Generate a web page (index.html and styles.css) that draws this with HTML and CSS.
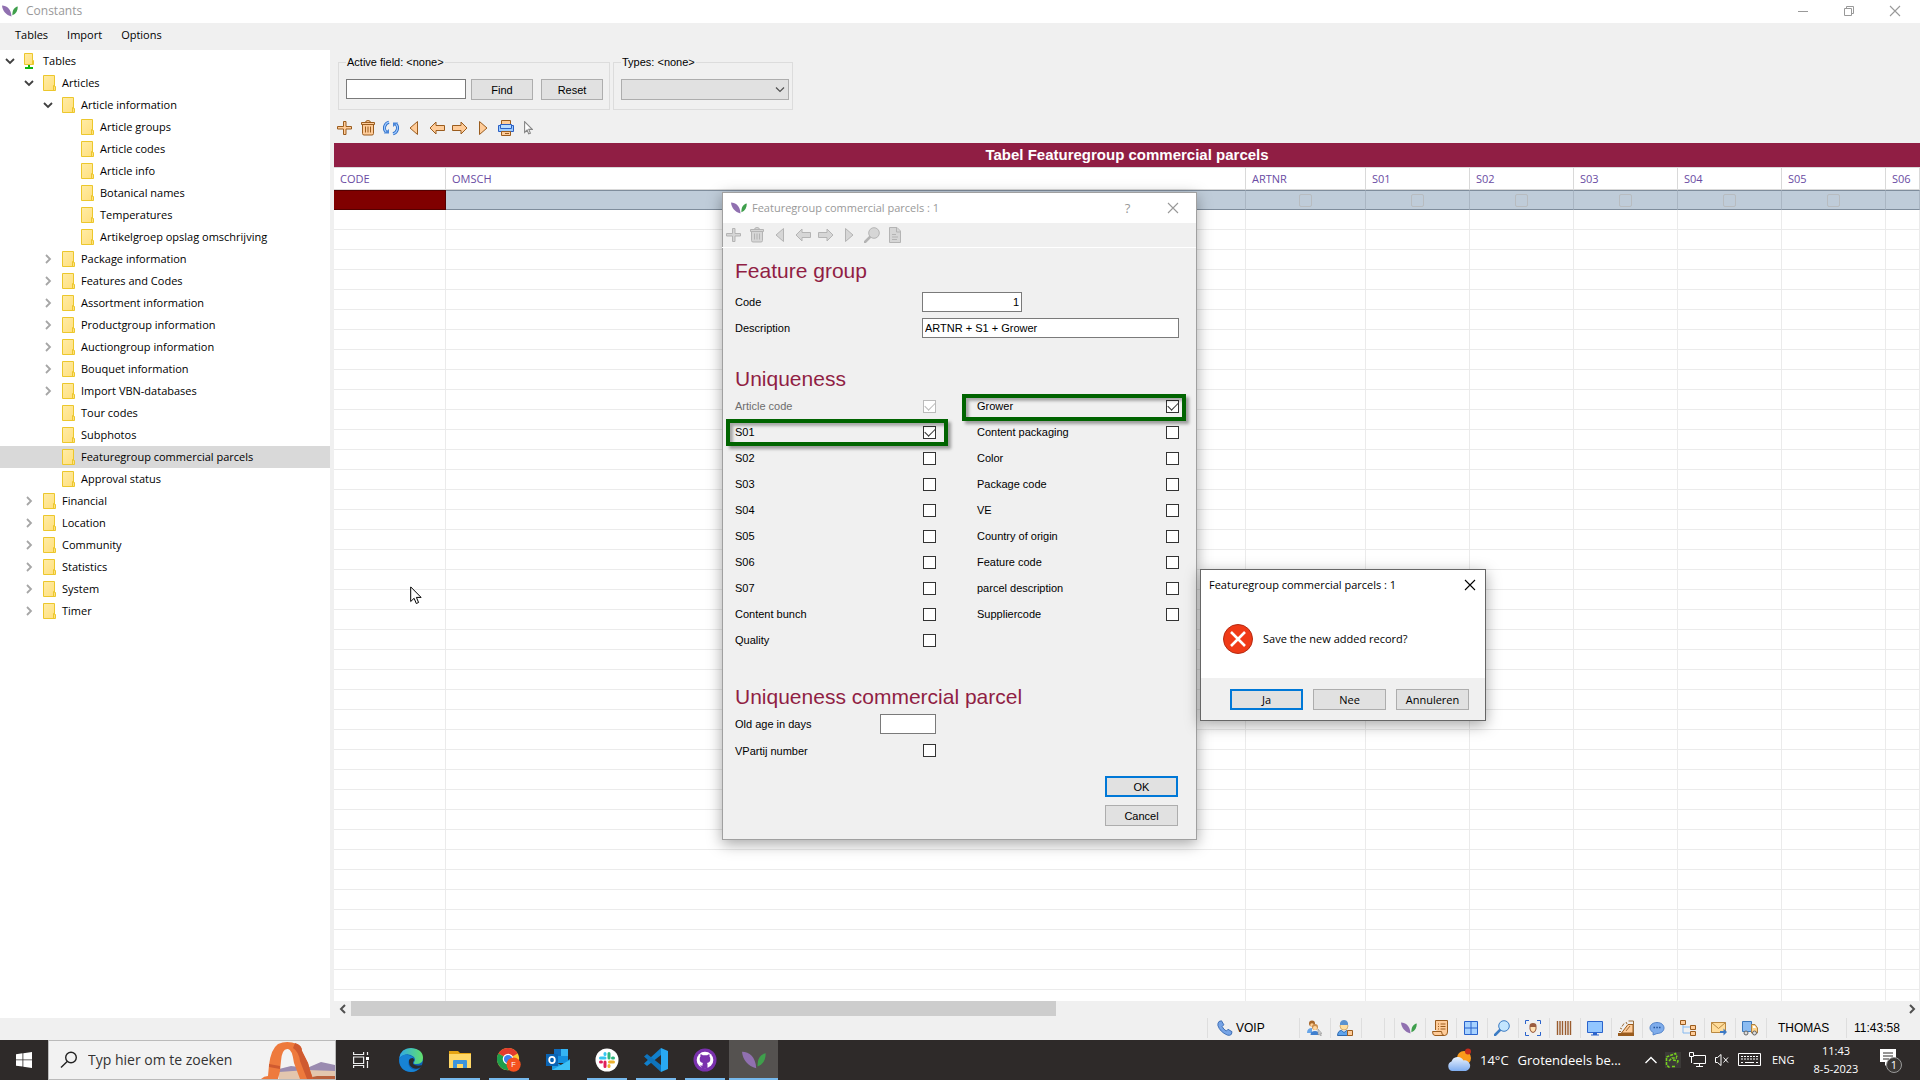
FILE: index.html
```html
<!DOCTYPE html>
<html lang="en">
<head>
<meta charset="utf-8">
<title>Constants</title>
<link rel="stylesheet" href="styles.css">
</head>
<body>
<svg class="sprite" aria-hidden="true">
  <linearGradient id="folder-fill" x1="0" y1="0" x2="1" y2="1"><stop offset="0" stop-color="#ffeca6"/><stop offset="1" stop-color="#ffdf7c"/></linearGradient>
  <linearGradient id="edge-top" x1="0" y1="0" x2="1" y2="0"><stop offset="0" stop-color="#2fa8e8"/><stop offset="1" stop-color="#62e06c"/></linearGradient>
  <linearGradient id="cloud-fill" x1="0" y1="0" x2="0" y2="1"><stop offset="0" stop-color="#eaf2fd"/><stop offset="1" stop-color="#7fadf0"/></linearGradient>
  <symbol id="folder" viewBox="0 0 13 16"><path d="M.5.5h11v11h1v4H.5z" fill="url(#folder-fill)" stroke="#ecc72c"/><path d="M10.500 15v-4.500h1" fill="none" stroke="#ecc72c"/></symbol>
  <symbol id="folder-root" viewBox="0 0 13 16"><path d="M.5.500h8v7h1v4h-9z" fill="url(#folder-fill)" stroke="#ecc72c"/><path d="M8.500 11V7.500" stroke="#ecc72c"/><path d="M4 12h2v2h3v2H1v-2h3z" fill="#12b412"/></symbol>
  <symbol id="leaf" viewBox="0 0 16 12"><path d="M0 .5C5 .5 9 4 9.500 11.500 4 10 .5 6 0 .5z" fill="#9070b0"/><path d="M15.800 1.500c-3.500.7-5.600 3.500-5.400 8.800C14 9 15.800 6 15.800 1.500z" fill="#3f9f4c"/></symbol>
  <symbol id="plus" viewBox="0 0 16 16"><path d="M6.500 1.500h2.500v5h5.500V9H9v5.500H6.500V9h-6V6.500h6z" class="ink"/></symbol>
  <symbol id="trash" viewBox="0 0 16 16"><path d="M2.500 4.500h11v9q0 1.500-1.500 1.500H4q-1.500 0-1.500-1.500z" class="ink"/><path d="M1.500 2.500h13v2h-13zM5.500 2.500q0-2 2.500-2t2.500 2M5.500 6.500v6M8 6.500v6M10.500 6.500v6" class="ink"/></symbol>
  <symbol id="refresh" viewBox="0 0 16 16"><path d="M6 2.200A6 6 0 0 0 3 12M10 13.800A6 6 0 0 0 13 4" fill="none" stroke="#2a6ac4" stroke-width="3"/><path d="M6 2.200A6 6 0 0 0 3 12M10 13.800A6 6 0 0 0 13 4" fill="none" stroke="#9cc8ff" stroke-width="1.200"/><path d="M.8 13.500H6V9zM15.200 2.500H10V7z" fill="#4a86d8"/></symbol>
  <symbol id="first" viewBox="0 0 16 16"><path d="M11.500 1.500v13L4 8z" class="ink"/></symbol>
  <symbol id="prev" viewBox="0 0 16 16"><path d="M1 8l6-6v3.500h8.500v5H7V14z" class="ink"/></symbol>
  <symbol id="next" viewBox="0 0 16 16"><path d="M15 8L9 2v3.500H.5v5H9V14z" class="ink"/></symbol>
  <symbol id="last" viewBox="0 0 16 16"><path d="M4.500 1.500v13L12 8z" class="ink"/></symbol>
  <symbol id="printer" viewBox="0 0 16 16"><path d="M3.500.5h9v5h-9z" fill="#fc9" stroke="#9a5c1e"/><path d="M.5 5.500h15v6H.5z" fill="#9ccbff" stroke="#2a5fc4"/><path d="M2.500 4.500h11v4h-11z" fill="#b9dcff" stroke="#2a5fc4"/><path d="M3.500 11.500h9v4h-9z" fill="#fc9" stroke="#9a5c1e"/><path d="M7 13.500h4" stroke="#9a5c1e"/></symbol>
  <symbol id="pointer" viewBox="0 0 12 19"><path d="M.7.9v14.600l3.400-3.200 2.200 5.200 2.300-1-2.200-5.100h4.700z"/></symbol>
  <symbol id="lens" viewBox="0 0 16 16"><path d="M6 10L1 15" class="handle" stroke-width="2.500" stroke-linecap="round"/><circle cx="10" cy="6" r="5.300" class="ink"/></symbol>
  <symbol id="page" viewBox="0 0 16 16"><path d="M2.500.5h7.500l3.500 3.500v11.500h-11z" class="ink"/><path d="M9.500.5V5h4M5 7.500h4M5 10h6M5 12.500h5" class="ink"/></symbol>
  <symbol id="close" viewBox="0 0 12 12"><path d="M1 1l10 10M11 1L1 11" fill="none" stroke="currentColor" stroke-width="1.100"/></symbol>
  <symbol id="open" viewBox="0 0 10 8"><path d="M1 2l4 4 4-4" fill="none" stroke="#404040" stroke-width="1.800"/></symbol>
  <symbol id="shut" viewBox="0 0 8 10"><path d="M2 1l4 4-4 4" fill="none" stroke="#a6a6a6" stroke-width="1.800"/></symbol>
</svg>

<header class="titlebar">
  <svg class="leaf"><use href="#leaf"/></svg>
  <span class="titlebar-name">Constants</span>
  <div class="caption-buttons">
    <button aria-label="Minimize"><svg width="12" height="12"><path d="M1 6.500h10" stroke="#999"/></svg></button>
    <button aria-label="Restore"><svg width="12" height="12" fill="none" stroke="#999"><path d="M1.500 3.500h7v7h-7zM3.500 3V1.500h7v7H9"/></svg></button>
    <button aria-label="Close"><svg width="12" height="12"><use href="#close"/></svg></button>
  </div>
</header>
<nav class="menubar"><button>Tables</button><button>Import</button><button>Options</button></nav>

<main class="workspace">
  <ul class="tree" role="tree">
    <li class="level-0"><svg class="twist"><use href="#open"/></svg><svg class="folder"><use href="#folder-root"/></svg>Tables</li>
    <li class="level-1"><svg class="twist"><use href="#open"/></svg><svg class="folder"><use href="#folder"/></svg>Articles</li>
    <li class="level-2"><svg class="twist"><use href="#open"/></svg><svg class="folder"><use href="#folder"/></svg>Article information</li>
    <li class="level-3"><svg class="twist"></svg><svg class="folder"><use href="#folder"/></svg>Article groups</li>
    <li class="level-3"><svg class="twist"></svg><svg class="folder"><use href="#folder"/></svg>Article codes</li>
    <li class="level-3"><svg class="twist"></svg><svg class="folder"><use href="#folder"/></svg>Article info</li>
    <li class="level-3"><svg class="twist"></svg><svg class="folder"><use href="#folder"/></svg>Botanical names</li>
    <li class="level-3"><svg class="twist"></svg><svg class="folder"><use href="#folder"/></svg>Temperatures</li>
    <li class="level-3"><svg class="twist"></svg><svg class="folder"><use href="#folder"/></svg>Artikelgroep opslag omschrijving</li>
    <li class="level-2"><svg class="twist"><use href="#shut"/></svg><svg class="folder"><use href="#folder"/></svg>Package information</li>
    <li class="level-2"><svg class="twist"><use href="#shut"/></svg><svg class="folder"><use href="#folder"/></svg>Features and Codes</li>
    <li class="level-2"><svg class="twist"><use href="#shut"/></svg><svg class="folder"><use href="#folder"/></svg>Assortment information</li>
    <li class="level-2"><svg class="twist"><use href="#shut"/></svg><svg class="folder"><use href="#folder"/></svg>Productgroup information</li>
    <li class="level-2"><svg class="twist"><use href="#shut"/></svg><svg class="folder"><use href="#folder"/></svg>Auctiongroup information</li>
    <li class="level-2"><svg class="twist"><use href="#shut"/></svg><svg class="folder"><use href="#folder"/></svg>Bouquet information</li>
    <li class="level-2"><svg class="twist"><use href="#shut"/></svg><svg class="folder"><use href="#folder"/></svg>Import VBN-databases</li>
    <li class="level-2"><svg class="twist"></svg><svg class="folder"><use href="#folder"/></svg>Tour codes</li>
    <li class="level-2"><svg class="twist"></svg><svg class="folder"><use href="#folder"/></svg>Subphotos</li>
    <li class="level-2 selected"><svg class="twist"></svg><svg class="folder"><use href="#folder"/></svg>Featuregroup commercial parcels</li>
    <li class="level-2"><svg class="twist"></svg><svg class="folder"><use href="#folder"/></svg>Approval status</li>
    <li class="level-1"><svg class="twist"><use href="#shut"/></svg><svg class="folder"><use href="#folder"/></svg>Financial</li>
    <li class="level-1"><svg class="twist"><use href="#shut"/></svg><svg class="folder"><use href="#folder"/></svg>Location</li>
    <li class="level-1"><svg class="twist"><use href="#shut"/></svg><svg class="folder"><use href="#folder"/></svg>Community</li>
    <li class="level-1"><svg class="twist"><use href="#shut"/></svg><svg class="folder"><use href="#folder"/></svg>Statistics</li>
    <li class="level-1"><svg class="twist"><use href="#shut"/></svg><svg class="folder"><use href="#folder"/></svg>System</li>
    <li class="level-1"><svg class="twist"><use href="#shut"/></svg><svg class="folder"><use href="#folder"/></svg>Timer</li>
  </ul>

  <section class="content">
    <div class="filters">
      <fieldset class="filter">
        <legend>Active field: &lt;none&gt;</legend>
        <input class="find-text" type="text" aria-label="Active field">
        <button class="push find-button">Find</button>
        <button class="push find-button">Reset</button>
      </fieldset>
      <fieldset class="filter types">
        <legend>Types: &lt;none&gt;</legend>
        <span class="select-wrap"><select aria-label="Types"><option></option></select><svg width="10" height="6"><path d="M1 .5l4 4 4-4" fill="none" stroke="#505050" stroke-width="1.200"/></svg></span>
      </fieldset>
    </div>
    <div class="toolbar">
      <button aria-label="Add"><svg><use href="#plus"/></svg></button>
      <button aria-label="Delete"><svg><use href="#trash"/></svg></button>
      <button aria-label="Refresh"><svg><use href="#refresh"/></svg></button>
      <button aria-label="First"><svg><use href="#first"/></svg></button>
      <button aria-label="Previous"><svg><use href="#prev"/></svg></button>
      <button aria-label="Next"><svg><use href="#next"/></svg></button>
      <button aria-label="Last"><svg><use href="#last"/></svg></button>
      <button aria-label="Print"><svg><use href="#printer"/></svg></button>
      <button aria-label="Select"><svg class="select-icon"><use href="#pointer"/></svg></button>
    </div>
    <h1 class="grid-title">Tabel Featuregroup commercial parcels</h1>
    <div class="grid-view">
      <table class="grid">
        <colgroup><col class="col-code"><col><col class="col-artnr"><col class="col-s"><col class="col-s"><col class="col-s"><col class="col-s"><col class="col-s"><col class="col-cut"></colgroup>
        <thead><tr><th>CODE</th><th>OMSCH</th><th>ARTNR</th><th>S01</th><th>S02</th><th>S03</th><th>S04</th><th>S05</th><th>S06</th></tr></thead>
        <tbody id="rows">
          <tr class="current"><td></td><td></td>
            <td><input type="checkbox" disabled aria-label="ARTNR"></td><td><input type="checkbox" disabled aria-label="S01"></td><td><input type="checkbox" disabled aria-label="S02"></td><td><input type="checkbox" disabled aria-label="S03"></td><td><input type="checkbox" disabled aria-label="S04"></td><td><input type="checkbox" disabled aria-label="S05"></td><td></td></tr>
        </tbody>
      </table>
    </div>
    <div class="scrollbar">
      <button aria-label="Scroll left"><svg width="8" height="10"><path d="M6 1L2 5l4 4" fill="none" stroke="#505050" stroke-width="2"/></svg></button>
      <div class="scroll-track"><div class="scroll-thumb"></div><div class="scroll-rest"></div></div>
      <button aria-label="Scroll right"><svg width="8" height="10"><path d="M2 1l4 4-4 4" fill="none" stroke="#505050" stroke-width="2"/></svg></button>
    </div>
  </section>
</main>

<footer class="statusbar">
  <div class="cell voip"><svg width="16" height="16" viewBox="0 0 16 16"><path d="M2 1.500L4.500.8l2.300 4-1.700 1.700q1.500 3 4.200 4.500L11 9.300l4 2.400-.6 2.600q-1.400 1.600-4 .8Q3 12 .9 5.500.6 3 2 1.500z" fill="#76a4e6" stroke="#3f6fb6"/></svg>VOIP</div>
  <div class="cell icon"><svg viewBox="0 0 16 16"><circle cx="6" cy="3.500" r="3" fill="#a8672a"/><circle cx="6" cy="5" r="1.800" fill="#ffcf94"/><path d="M1 13q0-5 5-5v5z" fill="#67a5e8"/><circle cx="9" cy="7" r="3" fill="#c98d4d"/><circle cx="9" cy="8" r="2" fill="#ffd79f"/><path d="M4.500 15q0-4 4.500-4 4 0 4 4z" fill="#3f7fcf"/><path d="M12 9v6l1.500-1 1 2 .8-.5-.8-2H16z" fill="#ccc" stroke="#888" stroke-width=".5"/></svg></div>
  <div class="cell icon"><svg viewBox="0 0 16 16"><circle cx="7" cy="6" r="4" fill="#ffdfa0" stroke="#b98a45" stroke-width=".6"/><path d="M3 5V3q1-3 4-3t4 3v2z" fill="#5b93cf"/><path d="M.5 15.500q.5-5 4-5l2.500 2 2.500-2q3 0 4 5z" fill="#5fa4ec" stroke="#2d67ad"/><path d="M10.500 10.500h5v5h-5z" fill="#fc9" stroke="#9a5c1e"/></svg></div>
  <div class="cell blank"></div><div class="cell narrow"></div>
  <div class="cell icon"><svg viewBox="0 0 16 12"><use href="#leaf"/></svg></div>
  <div class="cell icon"><svg viewBox="0 0 16 16"><path d="M3.500 10V.5h12V12q0 3.500-3 3.500H3Q.5 15.500.5 11.500h9q0 4 3 4" fill="#fc9" stroke="#9a5c1e"/><path d="M6 4h1M8.500 4h5M6 6.500h1M8.500 6.500h5M6 9h1M8.500 9h5" stroke="#9a5c1e"/></svg></div>
  <div class="cell icon"><svg viewBox="0 0 16 16"><path d="M1.500 1.500h13v13h-13zM8 1.500v13M1.500 8h13" fill="#a7d2ff" stroke="#2a63cc"/></svg></div>
  <div class="cell icon blue"><svg viewBox="0 0 16 16"><use href="#lens"/></svg></div>
  <div class="cell icon"><svg viewBox="0 0 16 16"><path d="M.5 4V.5H4M12 .5h3.500V4M15.500 12v3.500H12M4 15.500H.5V12" fill="none" stroke="#2a63cc"/><path d="M4.500 6q0-3 3.500-3t3.500 3v3q-1 3.500-3.500 4Q5.500 12.500 4.500 9z" fill="#9a5c3e"/><path d="M5.500 7h5v2q-.5 2.500-2.500 3Q6 11.500 5.500 9z" fill="#ffe2b4"/></svg></div>
  <div class="cell icon"><svg viewBox="0 0 16 16"><path d="M1.500 1v14M4 1v14M6.500 1v14M9.500 1v14M12 1v14M14.500 1v14" stroke="#9a5c2e" stroke-width="1.400"/></svg></div>
  <div class="cell icon"><svg viewBox="0 0 16 16"><path d="M.5 1.500h15v11H.5z" fill="#92c6ff" stroke="#2a63cc"/><path d="M6 13h4v1.500h2v1H4v-1h2z" fill="#2a63cc"/></svg></div>
  <div class="cell icon"><svg viewBox="0 0 16 16"><path d="M0 13h16v3H0z" fill="#9a5c1e"/><path d="M3.500 13L10 4.500h5V13z" fill="#fc9" stroke="#9a5c1e"/><path d="M10.500 1h5v12M6 3.500L4 6.500M1 11.500h2M2 8l2 1M8 2l1 2M12 6l-4 5" fill="none" stroke="#9a6c3a"/></svg></div>
  <div class="cell icon"><svg viewBox="0 0 16 16"><path d="M8 2.500c4 0 7 2.300 7 5.500s-3 5.500-7 5.500l-4 1.500.3-2.600C2.300 11.500 1 10 1 8c0-3.200 3-5.500 7-5.500z" fill="#7eaceb" stroke="#5686cb"/><path d="M4.500 7.500h1.500M7.300 7.500h1.500M10 7.500h1.500" stroke="#24549b" stroke-width="1.500"/></svg></div>
  <div class="cell icon"><svg viewBox="0 0 16 16"><path d="M3 4v9h8M3 7h8" fill="none" stroke="#84b8ef"/><path d="M.5.500h5v4h-5zM10.500 5.500h5v4h-5zM10.500 11.500h5v4h-5z" fill="#fc9" stroke="#9a5c1e"/></svg></div>
  <div class="cell icon"><svg viewBox="0 0 16 16"><path d="M.5 2.500h14v10H.5z" fill="#ffdc9a" stroke="#b98840"/><path d="M.5 2.500l7 6 7-6" fill="none" stroke="#b98840"/><path d="M9 11h3.500V8.500L16 12l-3.500 3.500V13H9z" fill="#3d79c5"/></svg></div>
  <div class="cell icon"><svg viewBox="0 0 16 16"><path d="M.5 1.500h9v10h-9z" fill="#8bbcf2" stroke="#3b78bd"/><path d="M9.500 4.500H13l2.500 3.500v5h-6z" fill="#ffd38a" stroke="#ad8040"/><path d="M11 6h2l1 2h-3z" fill="#fff"/><circle cx="4" cy="13" r="2" fill="#ddd" stroke="#666"/><circle cx="12.500" cy="13" r="2" fill="#ddd" stroke="#666"/></svg></div>
  <div class="cell user">THOMAS</div>
  <div class="cell time">11:43:58</div>
</footer>

<footer class="taskbar">
  <button class="start" aria-label="Start"><svg width="16" height="16" fill="#fff"><path d="M0 2.200l6.500-.9v6.200H0zM7.300 1.200L16 0v7.500H7.300zM0 8.300h6.500v6.200L0 13.700zM7.300 8.300H16V16l-8.700-1.200z"/></svg></button>
  <label class="search">
    <svg class="search-icon" width="18" height="18"><circle cx="11" cy="6.500" r="5.300" fill="none" stroke="#222" stroke-width="1.400"/><path d="M7.200 10.500L1 16.500" stroke="#222" stroke-width="1.400"/></svg>
    <input type="text" placeholder="Typ hier om te zoeken" aria-label="Typ hier om te zoeken">
    <svg class="arch" width="74" height="38" viewBox="0 0 74 38"><path d="M18 28l12-3 16 2 14-6 14 3v14H18z" fill="#9a8bb0"/><path d="M18 31l28-2 28 1v8H18z" fill="#e3c6ae"/><path d="M42 38l14-3h18v3z" fill="#b9603c"/><path d="M0 38q3-3 7-3l1-11Q10 8 17 3q9-4 19 0 5 2 5 7l6 12q2 8 5 16H39l-6-16Q31 8 27 8q-6-1-7 12l-1 10-2 8z" fill="#ee7a3d"/><path d="M34 2q7 2 7 8l6 12q2 8 5 16h-6L39 20q-1-9-7-13z" fill="#cf5a30"/><path d="M8 23l11 2v3l-11-2z" fill="#cf5a30"/></svg>
  </label>
  <button class="task-view" aria-label="Task View"><svg width="16" height="16" fill="none" stroke="#eee" stroke-width="1.200"><path d="M.6 0v2.500h10V0M.6 5h10v6.500H.6zM.6 16v-2.500h10V16M14.500 0v3M14.500 9v7"/><path d="M13 5h3v3h-3z" fill="#fff" stroke="none"/></svg></button>
  <button class="app" aria-label="Edge"><svg viewBox="0 0 24 24"><circle cx="12" cy="12" r="12" fill="#0d62b8"/><path d="M.3 10Q2 0 12 0q12 1 12 10 0 6-7 6-3 0-2-2 2-2 0-5Q8 3 .3 10z" fill="url(#edge-top)"/><path d="M.2 11Q3 6 9 7q5 1 6 4-3-2-5 1-2 6 3 9 4 2 8-1-4 4-9 4Q0 23 .2 11z" fill="#1783d4"/><path d="M14 16q4 3 9 1l-1 2q-4 3-8 1-5-3-4-8 1-2 4-2 2 2 0 4z" fill="#2b2a2c"/></svg></button>
  <button class="app running" aria-label="File Explorer"><svg viewBox="0 0 24 24"><path d="M1 3h9l2 2h11v15H1z" fill="#e6a413"/><path d="M1 6h22v14H1z" fill="#ffd767"/><path d="M5 20v-7q0-1 1-1h12q1 0 1 1v7h-4v-4H9v4z" fill="#3d94dc"/></svg></button>
  <button class="app running" aria-label="Chrome"><svg viewBox="0 0 26 26"><circle cx="12" cy="12" r="12" fill="#fcc934"/><path d="M12 12L1.600 6A12 12 0 0 1 22.400 6z" fill="#e33b2e"/><path d="M12 12L1.600 6A12 12 0 0 0 12 24l5-9z" fill="#1e9e4c"/><circle cx="12" cy="12" r="5.800" fill="#fff"/><circle cx="12" cy="12" r="4.500" fill="#3c7ff0"/><circle cx="18" cy="18" r="7.700" fill="#f4511e"/><text x="18" y="21" class="chrome-profile">F</text></svg></button>
  <button class="app" aria-label="Outlook"><svg viewBox="0 0 24 24"><path d="M8 1h14v14H8z" fill="#1490df"/><path d="M8 1h7v7H8z" fill="#0f6cbd"/><path d="M15 1h7v7h-7z" fill="#35b5f3"/><path d="M6 12l9 5 9-6v11H6z" fill="#1b9de2"/><path d="M6 22l18-10v10z" fill="#3ec1f6"/><path d="M0 6h12v12H0z" fill="#0a64b4"/><ellipse cx="6" cy="12" rx="2.800" ry="3.200" fill="none" stroke="#fff" stroke-width="1.800"/></svg></button>
  <button class="app running" aria-label="Slack"><svg viewBox="0 0 24 24"><circle cx="12" cy="12" r="11.500" fill="#fff"/><g stroke-width="3" stroke-linecap="round" fill="none"><path d="M10 5.500v1M5.500 10h4.500" stroke="#36c5f0"/><path d="M14 5.500v4.500M18.500 10h-1" stroke="#2eb67d"/><path d="M14 18.500v-1M14.500 14h4" stroke="#ecb22e"/><path d="M10 14v4.500M5.500 14h1" stroke="#e01e5a"/></g></svg></button>
  <button class="app running" aria-label="Visual Studio Code"><svg viewBox="0 0 24 24"><path d="M17 0l7 3v18l-7 3z" fill="#29a9f2"/><path d="M17 0v7L3 18l-3-2.500z" fill="#1180cc"/><path d="M0 8.500L3 6l14 11v7z" fill="#0f74bd"/></svg></button>
  <button class="app running" aria-label="GitHub Desktop"><svg viewBox="0 0 24 24"><circle cx="12" cy="12" r="11.500" fill="#7a31ad"/><circle cx="12" cy="12" r="8.300" fill="#fff"/><path d="M9.500 20.500V17.800Q7 18 6.200 16M14.500 20.500v-4q0-1-.5-1.500 3.500-.5 3.300-4.200 0-1.200-.8-2.300.3-1.200-.1-2.200-1.200 0-2.200.9h-4.400q-1-.9-2.200-.9-.4 1-.1 2.200-.8 1.100-.8 2.300Q6.500 14.500 10 15q-.5.500-.5 1.500v4z" fill="#7a31ad"/></svg></button>
  <button class="app running active" aria-label="Constants"><svg viewBox="0 0 16 12"><use href="#leaf"/></svg></button>
  <div class="tray">
    <button class="weather"><svg width="24" height="24"><circle cx="17" cy="10" r="7" fill="#fb9a1b"/><circle cx="21" cy="3.500" r="3" fill="#c42b1c"/><path d="M5 23a5 5 0 0 1-.5-9.500 6.500 6.500 0 0 1 12-1A5.300 5.300 0 0 1 19 23z" fill="url(#cloud-fill)"/></svg><span>14°C</span><span>Grotendeels be...</span></button>
    <svg class="chevron" width="12" height="8"><path d="M.5 7l5.500-5.500L11.500 7" fill="none" stroke="#fff" stroke-width="1.400"/></svg>
    <svg class="gpu" width="16" height="16"><path d="M0 0h16v16H0z" fill="#3c3a38"/><path d="M1.500 5l9-3.500 1.500 3.500M1.500 6v7l3 2.500M4 9l3-3h5M8 8l5 1-1 3M7 14.500h4" fill="none" stroke="#76d21c" stroke-width="1.500" stroke-dasharray="3 1"/></svg>
    <svg width="17" height="16" fill="none" stroke="#fff"><path d="M4.500 3.500h12v8h-12M10.500 11.500v3M7 14.500h7M.5.500h4v4h-4zM2.500 5v6"/></svg>
    <svg width="16" height="16" fill="none" stroke="#fff"><path d="M1.500 5.500h2l3.500-3v11l-3.500-3h-2zM9.500 5.500l4.500 5M14 5.500l-4.500 5"/></svg>
    <svg width="24" height="14" fill="none" stroke="#fff"><path d="M.5.500h22v12H.5z"/><path d="M3 3.500h17M3 6h17" stroke-dasharray="2 1"/><path d="M3 9.500h2M7 9.500h9M18 9.500h2"/></svg>
    <span class="language">ENG</span>
    <time class="clock">11:43<br>8-5-2023</time>
    <button class="notices" aria-label="Notifications"><svg width="28" height="28"><path d="M4 3h16v13h-7l-4 4v-4H4z" fill="#fff"/><path d="M7 7h10M7 10h10M7 13h6" stroke="#2d2a29"/><circle cx="18" cy="19" r="7.500" fill="#3a3735" stroke="#999"/><text x="18" y="23" class="notice-count">1</text></svg></button>
  </div>
</footer>

<section class="dialog feature-dialog" role="dialog" aria-label="Featuregroup commercial parcels : 1">
  <header class="dialog-title"><svg class="leaf"><use href="#leaf"/></svg><span>Featuregroup commercial parcels : 1</span><button class="help" aria-label="Help">?</button><button aria-label="Close"><svg width="12" height="12"><use href="#close"/></svg></button></header>
  <div class="toolbar disabled">
    <button aria-label="Add" disabled><svg><use href="#plus"/></svg></button>
    <button aria-label="Delete" disabled><svg><use href="#trash"/></svg></button>
    <button aria-label="First" disabled><svg><use href="#first"/></svg></button>
    <button aria-label="Previous" disabled><svg><use href="#prev"/></svg></button>
    <button aria-label="Next" disabled><svg><use href="#next"/></svg></button>
    <button aria-label="Last" disabled><svg><use href="#last"/></svg></button>
    <button aria-label="Search" disabled><svg><use href="#lens"/></svg></button>
    <button aria-label="Report" disabled><svg><use href="#page"/></svg></button>
  </div>
  <form class="form">
    <h2>Feature group</h2>
    <div class="field"><label for="code">Code</label><input id="code" class="code" type="text" value="1"></div>
    <div class="field"><label for="description">Description</label><input id="description" class="description" type="text" value="ARTNR + S1 + Grower"></div>
    <h2>Uniqueness</h2>
    <div class="checks">
      <div>
        <label class="check dim">Article code<input type="checkbox" checked disabled></label>
        <label class="check marked-left">S01<input type="checkbox" checked></label>
        <label class="check">S02<input type="checkbox"></label>
        <label class="check">S03<input type="checkbox"></label>
        <label class="check">S04<input type="checkbox"></label>
        <label class="check">S05<input type="checkbox"></label>
        <label class="check">S06<input type="checkbox"></label>
        <label class="check">S07<input type="checkbox"></label>
        <label class="check">Content bunch<input type="checkbox"></label>
        <label class="check">Quality<input type="checkbox"></label>
      </div>
      <div>
        <label class="check marked-right">Grower<input type="checkbox" checked></label>
        <label class="check">Content packaging<input type="checkbox"></label>
        <label class="check">Color<input type="checkbox"></label>
        <label class="check">Package code<input type="checkbox"></label>
        <label class="check">VE<input type="checkbox"></label>
        <label class="check">Country of origin<input type="checkbox"></label>
        <label class="check">Feature code<input type="checkbox"></label>
        <label class="check">parcel description<input type="checkbox"></label>
        <label class="check">Suppliercode<input type="checkbox"></label>
      </div>
    </div>
    <h2 class="parcel-heading">Uniqueness commercial parcel</h2>
    <div class="parcel">
      <label class="check">Old age in days<input class="days" type="text"></label>
      <label class="check">VPartij number<input type="checkbox"></label>
    </div>
    <div class="form-buttons">
      <button type="button" class="push default">OK</button>
      <button type="button" class="push">Cancel</button>
    </div>
  </form>
</section>

<section class="dialog message-dialog" role="alertdialog" aria-label="Featuregroup commercial parcels : 1">
  <header class="dialog-title"><span>Featuregroup commercial parcels : 1</span><button aria-label="Close"><svg width="12" height="12"><use href="#close"/></svg></button></header>
  <div class="message"><svg width="30" height="30"><circle cx="15" cy="15" r="14.500" fill="#f03a17" stroke="#b52a12"/><path d="M8 8l14 14M22 8L8 22" stroke="#fff" stroke-width="2.600"/></svg><p>Save the new added record?</p></div>
  <div class="message-buttons"><button class="push default">Ja</button><button class="push">Nee</button><button class="push">Annuleren</button></div>
</section>
<svg class="mouse" width="12" height="19"><use href="#pointer"/></svg>
<script src="app.js"></script>
</body>
</html>
```
FILE: styles.css
```css
* { box-sizing: border-box; }
body {
  margin: 0;
  height: 100vh;
  display: flex;
  flex-direction: column;
  overflow: hidden;
  background: #f0f0f0;
  color: #000;
  font: 11px/16px "Open Sans", sans-serif;
}
button, input, select { font: inherit; color: inherit; margin: 0; }
button { border: 0; padding: 0; background: none; }
svg { display: block; flex: none; }
.sprite { position: absolute; width: 0; height: 0; }
.leaf { width: 16px; height: 12px; }

/* window frame */
.titlebar { display: flex; align-items: center; height: 23px; padding: 0 2px 1px; background: #fff; color: #999; }
.titlebar-name { margin-left: 8px; font-size: 12px; }
.caption-buttons { display: flex; margin-left: auto; color: #999; }
.caption-buttons button { width: 46px; height: 20px; display: grid; place-items: center; }
.menubar { display: flex; gap: 19px; height: 27px; padding: 0 15px 4px; }
.workspace { flex: 1; min-height: 0; display: flex; }

/* navigation tree */
.tree { width: 330px; flex: none; margin: 0 4px 0 0; padding: 0; background: #fff; list-style: none; }
.tree li { display: flex; align-items: center; height: 22px; }
.twist { width: 10px; height: 10px; margin-right: 9px; }
.folder { width: 13px; height: 16px; margin-right: 6px; }
.level-0 { padding-left: 5px; }
.level-1 { padding-left: 24px; }
.level-2 { padding-left: 43px; }
.level-3 { padding-left: 62px; }
.tree .selected { background: #d9d9d9; }

/* filter boxes and toolbar */
.content { flex: 1; min-width: 0; display: flex; flex-direction: column; }
.filters, .form, .statusbar { font-family: "Liberation Sans", Arial, sans-serif; }
.filters { display: flex; gap: 3px; padding: 4px 0 0 4px; }
.filter { display: flex; width: 272px; min-width: 0; margin: 0; padding: 9px 6px 9px 7px; border: 1px solid #dcdcdc; }
.filter.types { width: 180px; padding-right: 3px; }
.filter legend { padding: 0 1px; }
.find-text { flex: none; width: 120px; height: 20px; border: 1px solid #7a7a7a; margin-right: 5px; }
.push { flex: none; width: 73px; height: 21px; background: #e1e1e1; border: 1px solid #adadad; text-align: center; }
.push.default { border: 2px solid #0078d7; }
.find-button { width: 62px; }
.find-button + .find-button { margin-left: 8px; }
.select-wrap { position: relative; flex: 1; }
.select-wrap select { appearance: none; width: 100%; height: 21px; background: #e1e1e1; border: 1px solid #adadad; border-radius: 0; }
.select-wrap svg { position: absolute; right: 4px; top: 8px; }
.toolbar { --ink: #9a5c1e; --fill: #fc9; display: flex; align-items: center; height: 33px; margin-left: -1px; padding-top: 3px; }
.toolbar button { width: 23px; height: 23px; display: grid; place-items: center; }
.toolbar svg { width: 16px; height: 16px; }
.toolbar .select-icon { width: 9px; height: 14px; fill: #fff; stroke: #888; stroke-width: 1.5; }
.ink { fill: var(--fill); stroke: var(--ink); }
.handle { stroke: var(--ink); }
.toolbar.disabled { --ink: #b4b4b4; --fill: #d6d6d6; height: 25px; padding: 0; border-bottom: 1px solid #fff; }

/* data grid */
.grid-title { margin: 0; height: 24px; background: #901e44; color: #fff; text-align: center; font: bold 15px/24px "Liberation Sans", Arial, sans-serif; }
.grid-view { flex: 1; min-height: 0; overflow: hidden; background: #fff; }
.grid { width: 100%; table-layout: fixed; border-collapse: separate; border-spacing: 0; }
.col-code { width: 112px; }
.col-artnr { width: 120px; }
.col-s { width: 104px; }
.col-cut { width: 34px; }
.grid th { height: 23px; padding: 0 0 0 6px; text-align: left; font-weight: 400; color: #6a4ba3; border: 1px solid #d9d9d9; border-width: 1px 1px 1px 0; }
.grid td { height: 20px; padding: 0; border: 1px solid #ebebeb; border-width: 0 1px 1px 0; }
.grid .current td { background: #bfccd9; border-color: #aab6c3; border-top: 1px solid #7f8d9c; border-bottom-color: #7f8d9c; }
.grid .current td:first-child { background: #800000; border-color: #500; }
.grid input { appearance: none; display: block; width: 13px; height: 13px; margin: 0 auto; border: 1px solid #b8bcc0; border-radius: 2px; }
.scrollbar { display: flex; height: 17px; }
.scrollbar button { width: 17px; padding-bottom: 1px; display: grid; place-items: center; }
.scroll-track { flex: 1; display: flex; }
.scroll-thumb { flex: 5; height: 15px; background: #cdcdcd; }
.scroll-rest { flex: 6; }

/* status bar */
.statusbar { display: flex; justify-content: flex-end; height: 22px; padding-bottom: 2px; font-size: 12px; }
.cell { display: flex; align-items: center; border-left: 1px solid #dedede; }
.cell.voip { width: 92px; gap: 3px; padding-left: 9px; }
.cell.icon { width: 31px; padding-right: 2px; justify-content: center; }
.cell.icon svg { width: 16px; height: 16px; }
.cell.blank { width: 23px; }
.cell.narrow { width: 10px; }
.cell.user { width: 80px; padding-left: 11px; }
.cell.time { width: 74px; padding-left: 7px; }
.blue { --ink: #3c7cc4; --fill: #c4e6ff; }

/* taskbar */
.taskbar { display: flex; height: 40px; background: #2e2a29; color: #fff; }
.taskbar button { display: grid; place-items: center; }
.taskbar .start { width: 48px; }
.search { position: relative; display: flex; align-items: center; width: 288px; background: #f2f2f2; border: 1px solid #bbb; }
.search-icon { margin-left: 11px; }
.search input { width: 240px; margin-left: 8px; border: 0; background: none; font-size: 14px; }
.search input::placeholder { color: #333; opacity: 1; }
.arch { position: absolute; right: 0; bottom: 0; }
.taskbar .task-view { width: 50px; }
.taskbar .app { width: 49px; height: 40px; padding-top: 2px; border-bottom: 2px solid transparent; }
.app svg { width: 24px; height: 24px; }
.taskbar .running { background: linear-gradient(#76b9ed, #76b9ed) center bottom / 40px 2px no-repeat border-box; }
.taskbar .active { background: #555250; border-bottom-color: #76b9ed; }
.chrome-profile { font: 8px "Liberation Sans", sans-serif; fill: #fff; text-anchor: middle; }
.tray { display: flex; align-items: center; margin-left: auto; gap: 8px; }
.taskbar .weather { display: flex; align-items: center; gap: 9px; margin-right: 16px; font-size: 13px; }
.language { margin-left: 2px; width: 28px; }
.clock { width: 56px; margin-right: 4px; text-align: center; line-height: 18px; }
.taskbar .notices { width: 44px; justify-items: start; }
.notice-count { font: 11px "Open Sans", sans-serif; fill: #fff; text-anchor: middle; }

/* floating windows */
.dialog { position: absolute; border: 1px solid #a0a0a0; box-shadow: 0 4px 14px rgba(0, 0, 0, .35); background: #f0f0f0; }
.dialog-title { display: flex; align-items: center; height: 30px; padding-bottom: 1px; background: #fff; }
.dialog-title span { flex: 1; }
.dialog-title button { width: 45px; height: 28px; display: grid; place-items: center; }
.dialog-title .help { font-size: 13px; }
.feature-dialog { left: 722px; top: 192px; width: 475px; }
.feature-dialog .dialog-title { padding-left: 8px; padding-right: 1px; color: #999; }
.feature-dialog .dialog-title span { margin-left: 5px; }
.form { padding: 10px 17px 13px 12px; }
.form h2 { margin: 0 0 5px; font-size: 21px; line-height: 26px; font-weight: 400; color: #901e44; }
.field { display: flex; align-items: center; height: 26px; }
.field label { width: 187px; }
.form input[type="text"] { height: 20px; padding: 0 2px; border: 1px solid #7a7a7a; background: #fff; }
.form .code { width: 100px; text-align: right; }
.form .description { flex: 1; }
.form .field + h2 { margin: 25px 0 1px; }
.checks { display: grid; grid-template-columns: 201px 1fr; gap: 41px; }
.check { position: relative; display: flex; align-items: center; justify-content: space-between; height: 26px; }
.check.dim { color: #6d6d6d; }
.check input[type="checkbox"] { appearance: none; position: relative; width: 13px; height: 13px; border: 1px solid #333; background: #fff; }
.check input:checked::before { content: ""; position: absolute; left: 1px; top: 1px; width: 9px; height: 5px; border: 1px solid #333; border-width: 0 0 1px 1px; transform: rotate(-45deg); }
.check.dim input[type="checkbox"], .check.dim input:checked::before { border-color: #bbb; }
.marked-left::after, .marked-right::after { content: ""; position: absolute; border: 4px solid #006400; box-shadow: 3px 3px 3px rgba(0, 0, 0, .35), inset 3px 3px 3px rgba(0, 0, 0, .3); }
.marked-left::after { inset: 0 -12px -1px -9px; }
.marked-right::after { inset: 1px -7px -2px -15px; }
.form .parcel-heading { margin: 31px 0 0; }
.parcel { width: 201px; }
.parcel .check { height: 27px; }
.parcel .days { width: 56px; }
.form-buttons { display: flex; flex-direction: column; align-items: flex-end; gap: 8px; padding: 12px 1px 0 0; }
.message-dialog { left: 1200px; top: 569px; width: 286px; border-color: #666; }
.message-dialog .dialog-title { padding-left: 8px; }
.message-dialog .dialog-title button { width: 30px; }
.message { display: flex; align-items: center; gap: 10px; height: 78px; padding: 0 22px; background: #fff; }
.message p { margin: 0; }
.message-buttons { display: flex; justify-content: flex-end; gap: 10px; padding: 11px 16px 10px; }
.mouse { position: absolute; left: 410px; top: 586px; fill: #fff; stroke: #000; }
```
FILE: app.js
```js
// Fill the rest of the grid with empty rows.
const rows = document.getElementById("rows");
for (let i = 0; i < 40; i++) {
  const row = rows.insertRow();
  for (let c = 0; c < 9; c++) row.insertCell();
}
```
